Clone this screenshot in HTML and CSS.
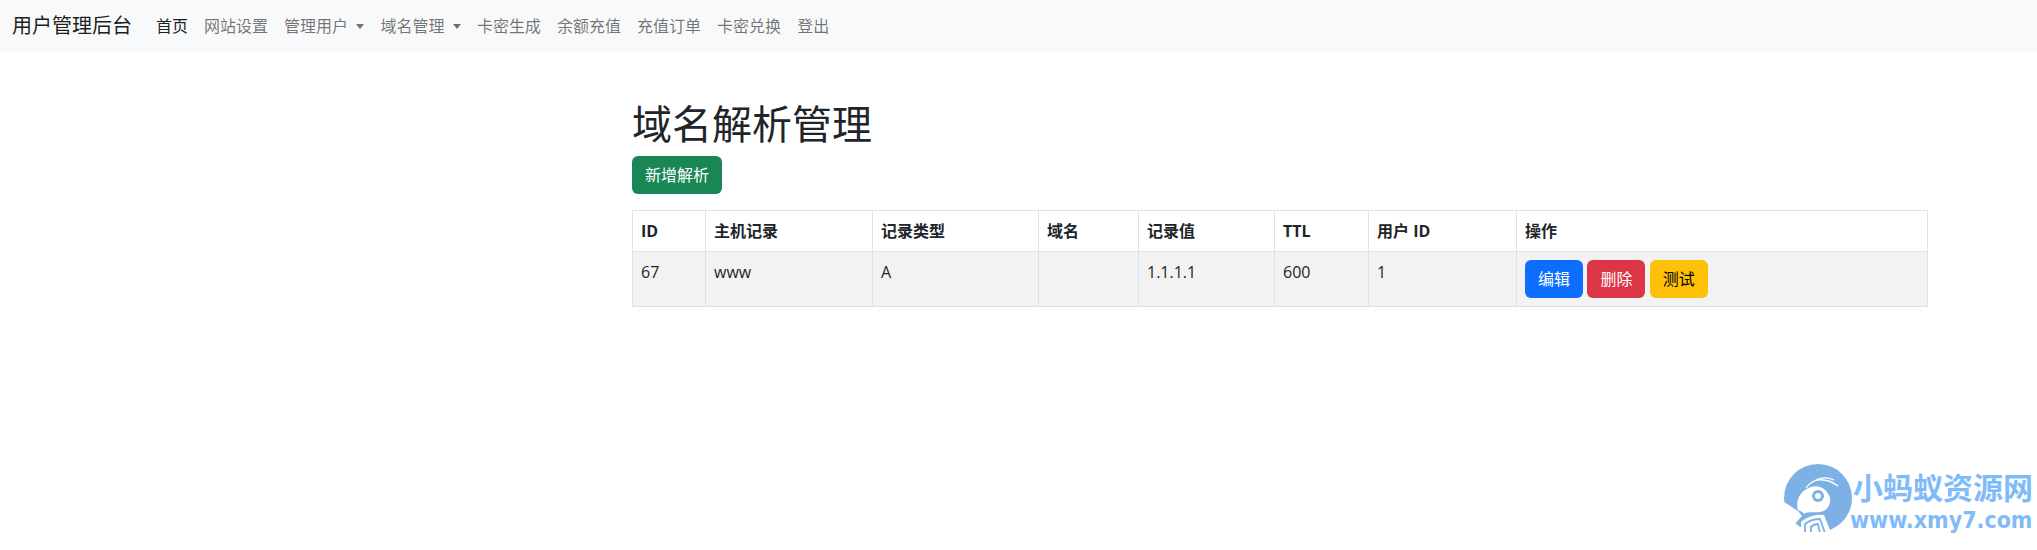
FILE: index.html
```
<!DOCTYPE html>
<html lang="zh-CN">
<head>
<meta charset="utf-8">
<title>域名解析管理</title>
<link rel="stylesheet" href="styles.css">
</head>
<body>
<nav class="navbar">
  <a class="brand" href="#">用户管理后台</a>
  <ul class="nav">
    <li><a class="nav-link active" href="#">首页</a></li>
    <li><a class="nav-link" href="#">网站设置</a></li>
    <li><a class="nav-link dropdown" href="#">管理用户</a></li>
    <li><a class="nav-link dropdown" href="#">域名管理</a></li>
    <li><a class="nav-link" href="#">卡密生成</a></li>
    <li><a class="nav-link" href="#">余额充值</a></li>
    <li><a class="nav-link" href="#">充值订单</a></li>
    <li><a class="nav-link" href="#">卡密兑换</a></li>
    <li><a class="nav-link" href="#">登出</a></li>
  </ul>
</nav>
<main class="container">
  <h1 class="title">域名解析管理</h1>
  <a class="btn btn-success" href="#">新增解析</a>
  <table class="table">
    <colgroup>
      <col class="c-id"><col class="c-host"><col class="c-type"><col class="c-domain"><col class="c-value"><col class="c-ttl"><col class="c-user"><col class="c-actions">
    </colgroup>
    <thead>
      <tr><th>ID</th><th>主机记录</th><th>记录类型</th><th>域名</th><th>记录值</th><th>TTL</th><th>用户 ID</th><th>操作</th></tr>
    </thead>
    <tbody>
      <tr>
        <td>67</td><td>www</td><td>A</td><td></td><td>1.1.1.1</td><td>600</td><td>1</td>
        <td><div class="actions"><a class="btn btn-primary" href="#">编辑</a><a class="btn btn-danger" href="#">删除</a><a class="btn btn-warning" href="#">测试</a></div></td>
      </tr>
    </tbody>
  </table>
</main>
<div class="watermark">
  <svg class="wm-logo" viewBox="0 0 68 68" width="68" height="68" aria-hidden="true">
    <circle cx="34" cy="34" r="34" fill="#7db1e6"/>
    <path d="M14 46C11 36 17 26 27 23C36 20 44 26 46 34C47 41 43 47 36 48C30 49 24 47 20 50C18 47 16 47 14 46Z" fill="#fff"/>
    <circle cx="34" cy="32" r="6" fill="#7db1e6"/>
    <circle cx="34" cy="32" r="3" fill="#fff"/>
    <path d="M22 24C28 15 40 12 54 22M30 17C36 13 44 13 50 16" fill="none" stroke="#fff" stroke-width="1.3"/>
    <path d="M0 38L14 47L18 52L9 62C3 56 0 47 0 38Z" fill="#fff"/>
    <path d="M17 69V58C24 52 33 50 40 51L46 66L46 69Z" fill="#fff"/>
    <path d="M21 69V60C26 56 31 55 36 55L41 69M27 69V63C30 60 32 60 34 60L36 69" fill="none" stroke="#7db1e6" stroke-width="1.8"/>
  </svg>
  <div class="wm-text">
    <div class="wm-name">小蚂蚁资源网</div>
    <div class="wm-url">www.xmy7.com</div>
  </div>
</div>
</body>
</html>
```

FILE: styles.css
```
* {
  box-sizing: border-box;
}

html, body {
  margin: 0;
  height: 100%;
}

body {
  position: relative;
  background: #fff;
  color: #212529;
  font-family: "Open Sans", "Noto Sans CJK SC", sans-serif;
  font-size: 16px;
  line-height: 24px;
  overflow: hidden;
}

a {
  text-decoration: none;
}

.navbar {
  display: flex;
  align-items: center;
  height: 52px;
  padding: 0 12px;
  background: #f8f9fa;
}

.brand {
  margin-right: 16px;
  font-size: 20px;
  line-height: 30px;
  color: rgba(0, 0, 0, 0.9);
}

.nav {
  display: flex;
  margin: 0;
  padding: 0;
  list-style: none;
}

.nav-link {
  display: block;
  padding: 8px;
  color: rgba(0, 0, 0, 0.55);
}

.nav-link.active {
  color: rgba(0, 0, 0, 0.9);
}

.dropdown::after {
  content: "";
  display: inline-block;
  margin-left: 8px;
  margin-right: 0.5px;
  vertical-align: 3px;
  border-top: 5px solid;
  border-left: 4px solid transparent;
  border-right: 4px solid transparent;
}

.container {
  width: 1296px;
  margin-left: 632px;
  padding-top: 48px;
}

.title {
  margin: 0 0 8px;
  font-size: 40px;
  font-weight: 400;
  line-height: 48px;
}

.btn {
  display: inline-block;
  padding: 7px 13px;
  border-radius: 6px;
  line-height: 24px;
  text-align: center;
}

.btn-success { background: #198754; color: #fff; }
.btn-primary { background: #0d6efd; color: #fff; }
.btn-danger { background: #dc3545; color: #fff; }
.btn-warning { background: #ffc107; color: #000; }

.table {
  width: 100%;
  margin-top: 16px;
  border-collapse: collapse;
  table-layout: fixed;
}

.table th,
.table td {
  padding: 8px;
  border: 1px solid #dee2e6;
  text-align: left;
  vertical-align: top;
}

.table th {
  font-weight: 700;
}

.table tbody tr {
  background: #f2f2f2;
}

.c-id { width: 73px; }
.c-host { width: 167px; }
.c-type { width: 166px; }
.c-domain { width: 100px; }
.c-value { width: 136px; }
.c-ttl { width: 94px; }
.c-user { width: 148px; }

.actions {
  display: flex;
  gap: 4.4px;
}

.watermark {
  position: absolute;
  left: 1784px;
  top: 464px;
  display: flex;
  gap: 1px;
}

.wm-text {
  color: #7fbbf8;
  font-weight: 700;
  white-space: nowrap;
}

.wm-name {
  font-family: "Noto Sans CJK SC", sans-serif;
  font-size: 30px;
  line-height: 44px;
}

.wm-url {
  margin-left: -3px;
  font-family: "DejaVu Sans", sans-serif;
  font-stretch: condensed;
  font-size: 23px;
  line-height: 24px;
}
```
